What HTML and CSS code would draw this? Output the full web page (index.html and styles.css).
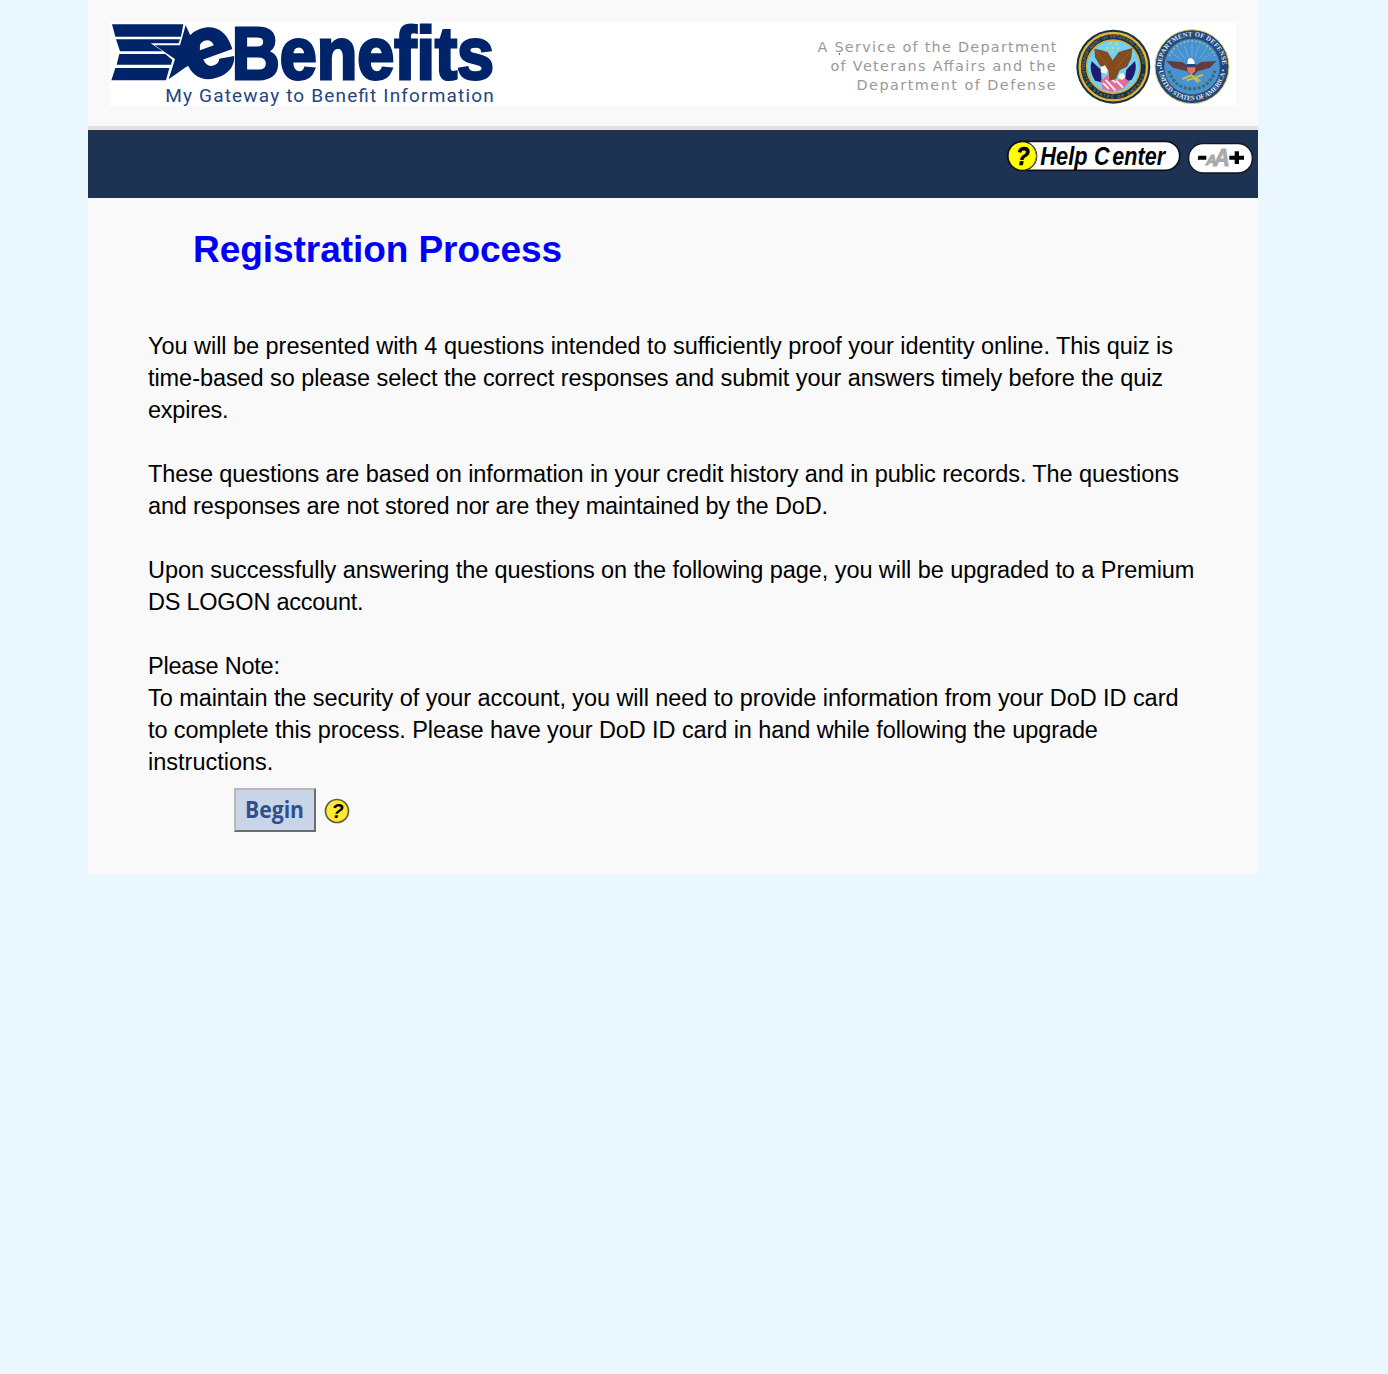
FILE: index.html
```html
<!DOCTYPE html>
<html lang="en">
<head>
<meta charset="utf-8">
<title>eBenefits - Registration Process</title>
<link rel="stylesheet" href="styles.css">
</head>
<body>
<div class="page">
  <header class="header">
    <div class="banner">
      <svg class="logo" viewBox="90 66 1170 252" role="img" aria-label="eBenefits">
        <g fill="#00246a">
          <path d="M96 73H310L303 110H106ZM108 118H300L296 130H212L248 154H120ZM118 162H256L277 180 273 194H110ZM106 204H268L258 241H94Z"/>
          <path d="M317 76L330 104 362 112 355 185 318 201 266 238 285 177 224 136H300Z"/>
          <text class="logo-e" x="0" y="0" transform="translate(337 257) rotate(-20)" textLength="158" lengthAdjust="spacingAndGlyphs">e</text>
          <text class="logo-name" transform="translate(455 237) scale(.887 1)">Benefits</text>
        </g>
        <text class="tagline" x="256" y="307" textLength="985">My Gateway to Benefit Information</text>
      </svg>
      <svg class="service" viewBox="0 0 250 84">
        <text x="7.500" y="30.200" textLength="239">A Service of the Department</text>
        <text x="20.500" y="49.200" textLength="225">of Veterans Affairs and the</text>
        <text x="46.500" y="67.500" textLength="199">Department of Defense</text>
        <circle cx="29.500" cy="32" r=".7" fill="#222"/>
      </svg>
      <svg class="seals" viewBox="30 6 486 252">
        <defs>
          <path id="vaTop" d="M60 140A86 86 0 0 1 232 140"/>
          <path id="vaBottom" d="M50 140A95 95 0 0 0 242 140"/>
          <path id="dodTop" d="M289 141A92 92 0 0 1 473 141"/>
          <path id="dodBottom" d="M281 141A100 100 0 0 0 481 141"/>
        </defs>
        <circle cx="145" cy="140" r="111" fill="#173047"/>
        <circle cx="145" cy="140" r="101" fill="none" stroke="#e9b632" stroke-width="7"/>
        <circle cx="145" cy="140" r="80" fill="#6fd3f5" stroke="#d9aa38" stroke-width="5"/>
        <g class="va-ring"><text><textPath href="#vaTop" textLength="262">DEPARTMENT OF VETERANS AFFAIRS</textPath></text>
        <text><textPath href="#vaBottom" textLength="280">UNITED STATES OF AMERICA</textPath></text></g>
        <path d="M80 123L108 149 110 187 90 182Q71 151 80 123ZM210 123L184 149 178 187 200 179Q218 151 210 123Z" fill="#201b70"/>
        <path d="M108 181L128 165 154 181 180 174 194 186 174 207 141 216 112 207Z" fill="#e56d9e"/>
        <path d="M114 189L132 207M122 180L151 211M154 182L174 203M132 171L152 188" stroke="#fff" stroke-width="5"/>
        <path d="M88 86L110 91 128 96 143 121 161 96 202 84 199 114 186 140 164 151 153 177 133 182 130 150 105 137 90 112Z" fill="#854b20"/>
        <path d="M93 94L130 140M196 94L151 147" stroke="#95602a" stroke-width="3"/>
        <path d="M108 141L120 136 128 149 124 161 107 157ZM162 163L174 159 182 170 172 180 160 174Z" fill="#fff8df"/>
        <g fill="#ded761"><circle cx="137" cy="70" r="4"/><circle cx="154" cy="71" r="4"/><circle cx="127" cy="84" r="4"/><circle cx="144" cy="84" r="4"/><circle cx="160" cy="85" r="4"/><circle cx="141" cy="97" r="3"/></g>
        <circle cx="381" cy="140" r="111" fill="#244779" stroke="#ddcf67" stroke-width="3"/>
        <circle cx="381" cy="140" r="84" fill="#4992d2" stroke="#345d83" stroke-width="2"/>
        <g class="dod-ring"><text><textPath href="#dodTop" textLength="282">DEPARTMENT OF DEFENSE</textPath></text>
        <text><textPath href="#dodBottom" textLength="306">• UNITED STATES OF AMERICA •</textPath></text></g>
        <path d="M381 110V74M370 111L359 77M391 111L402 77M359 115L338 86M403 115L424 86M349 119L322 100M413 119L439 100" stroke="#69afdd" stroke-width="3"/>
        <path d="M313 108A74 74 0 0 1 449 108" fill="none" stroke="#a5c383" stroke-width="5" stroke-dasharray="5 7"/>
        <path d="M312 152Q327 204 381 207 434 204 450 152" fill="none" stroke="#376e67" stroke-width="9" stroke-dasharray="9 5"/>
        <path d="M303 122L353 127 365 135 393 135 409 126 454 123 435 143 398 154 387 166 374 163 364 153 324 143Z" fill="#653c3b"/>
        <path d="M369 118Q380 108 388 123L389 133H367Z" fill="#fff"/>
        <path d="M365 132H392V143H365Z" fill="#264778"/>
        <path d="M366 142H391L390 154 379 165 368 155Z" fill="#e8716b"/>
        <path d="M352 177L379 166 406 183M365 181L393 172 414 164M383 168L399 188" fill="none" stroke="#cabc52" stroke-width="6"/>
      </svg>
    </div>
  </header>
  <nav class="toolbar">
    <svg class="help" viewBox="22 60 522 96" role="img" aria-label="Help Center">
      <rect x="24" y="64" width="516" height="87" rx="43" fill="#fff" stroke="#10131a" stroke-width="5"/>
      <circle cx="68" cy="108" r="43" fill="#ff0" stroke="#10131a" stroke-width="4"/>
      <path d="M91 70Q131 108 91 146" fill="none" stroke="#777" stroke-width="3"/>
      <text class="help-mark" x="49" y="134" textLength="41" lengthAdjust="spacingAndGlyphs">?</text>
      <text class="help-label" transform="translate(122 134) scale(.85 1)">Help</text>
      <text class="help-label" transform="translate(283 134) scale(.84 1)"><tspan class="wide">C</tspan>enter</text>
    </svg>
    <svg class="size" viewBox="563 66 201 99" role="img" aria-label="Text size">
      <rect x="565" y="71" width="191" height="88" rx="43" fill="#fff" stroke="#11151e" stroke-width="4"/>
      <path d="M594 107H618V119H592Z"/>
      <g class="size-a"><text x="617" y="136" textLength="32" lengthAdjust="spacingAndGlyphs" font-size="43">A</text><text x="640" y="138" textLength="48" lengthAdjust="spacingAndGlyphs" font-size="74">A</text></g>
      <path d="M703 94H716V107H731V119H716V132H703V119H687V107H703Z"/>
    </svg>
  </nav>
  <main class="content">
    <h1>Registration Process</h1>
    <div class="copy">
      <p><span class="fit-a">You will be presented with 4 questions intended to sufficiently proof your identity online. This quiz is</span><br>
      <span class="fit-b">time-based so please select the correct responses and submit your answers timely before the quiz</span><br>
      <span class="fit-e">expires.</span></p>
      <p><span class="fit-c">These questions are based on information in your credit history and in public records. The questions</span><br>
      <span class="fit-d">and responses are not stored nor are they maintained by the DoD.</span></p>
      <p><span class="fit-b">Upon successfully answering the questions on the following page, you will be upgraded to a Premium</span><br>
      <span class="fit-e">DS LOGON account.</span></p>
      <p><span class="fit-e">Please Note:</span><br>
      <span class="fit-b">To maintain the security of your account, you will need to provide information from your DoD ID card</span><br>
      <span class="fit-c">to complete this process. Please have your DoD ID card in hand while following the upgrade</span><br>
      instructions.</p>
    </div>
    <div class="actions">
      <button class="begin" type="button"><svg viewBox="0 0 60 32"><text x="0" y="24" textLength="59" lengthAdjust="spacingAndGlyphs">Begin</text></svg></button>
      <svg class="tip" viewBox="0 0 26 26" role="img" aria-label="Help"><circle cx="13" cy="13" r="11.500" fill="#ffeb2d" stroke="#606045" stroke-width="1.700"/><text x="7.600" y="20">?</text></svg>
    </div>
  </main>
</div>
</body>
</html>
```
FILE: styles.css
```css
* { box-sizing: border-box; }
body { margin: 0; min-height: 1374px; background: #eaf7ff; font-family: "Liberation Sans", Arial, sans-serif; }
svg { display: block; flex: none; overflow: visible; }
.page { width: 1170px; height: 874px; margin-left: 88px; background: #f9f9f9; }
.header { height: 130px; padding: 22px 22px 0; border-bottom: 4px solid #e4e0e0; }
.banner { display: flex; width: 1126px; height: 84px; background: #fff; }
.logo { width: 390px; height: 84px; }
.logo-name { font: bold 225px "Liberation Sans", Arial, sans-serif; stroke: #00246a; stroke-width: 9px; }
.logo-e { font: 900 275px Inter, sans-serif; }
.tagline { font: 400 57px Roboto, sans-serif; fill: #26457f; }
.service { width: 250px; height: 84px; margin-left: 310px; font: 14.4px "DejaVu Sans", sans-serif; fill: #999; }
.seals { width: 162px; height: 84px; margin-left: 15px; }
.va-ring { font: bold 14px "Liberation Sans", sans-serif; fill: #6f784f; }
.dod-ring { font: bold 20px "Liberation Serif", serif; fill: #dfe7ee; }
.toolbar { display: flex; align-items: flex-start; height: 68px; padding: 10px 4px 0 919px; background: #1e3253; }
.help { width: 174px; height: 32px; }
.help-mark { font: italic bold 75px "Liberation Sans", sans-serif; stroke: #000; stroke-width: 2px; }
.help-label { font: italic bold 77px "Liberation Sans", sans-serif; }
.wide { letter-spacing: 10px; }
.size { width: 67px; height: 33px; margin: 2px 0 0 7px; }
.size-a { font-family: "Liberation Sans", sans-serif; font-weight: bold; font-style: italic; fill: #aaa; stroke: #aaa; stroke-width: 3px; }
.content { padding: 31px 0 0 60px; }
h1 { margin: 0 0 0 45px; height: 42px; line-height: 42px; font-size: 37px; letter-spacing: -.05px; color: #0000fa; white-space: nowrap; }
.copy { padding-top: 59px; font-size: 23.5px; line-height: 32px; color: #000; white-space: nowrap; }
.copy p { margin: 0 0 32px; }
.copy p:last-child { margin: 0; }
.fit-a { letter-spacing: -.038px; }
.fit-b { letter-spacing: -.067px; }
.fit-c { letter-spacing: -.085px; }
.fit-d { letter-spacing: -.155px; }
.fit-e { letter-spacing: -.24px; }
.actions { display: flex; align-items: flex-start; padding: 10px 0 0 86px; }
.begin { width: 82px; height: 44px; margin: 0; padding: 4px 9px; background: #c8d4e7; border: 2px solid; border-color: #b8b8b8 #6c6c6c #6c6c6c #b8b8b8; }
.begin svg { width: 60px; height: 32px; font: bold 23px "Open Sans", sans-serif; fill: #30508c; }
.tip { width: 26px; height: 26px; margin: 10px 0 0 8px; font: italic bold 20px "Liberation Sans", sans-serif; }
```
